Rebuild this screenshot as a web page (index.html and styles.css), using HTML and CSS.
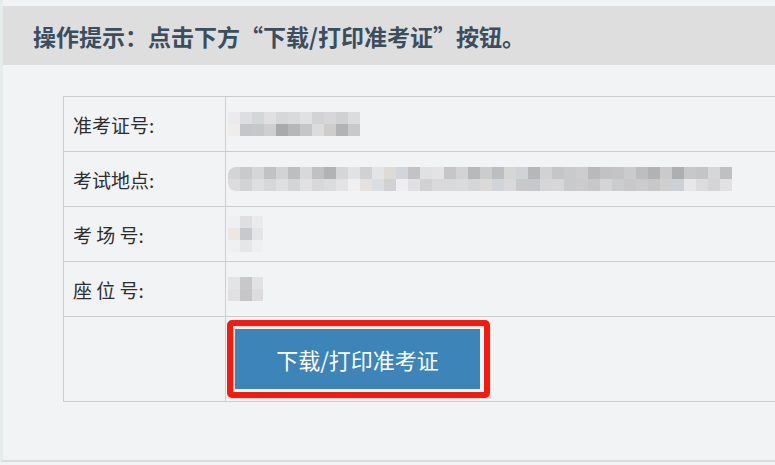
FILE: index.html
```html
<!DOCTYPE html>
<html lang="zh-CN">
<head>
    <meta charset="UTF-8">
    <meta name="viewport" content="width=device-width, initial-scale=1.0">
    <title>准考证打印</title>
    <link rel="stylesheet" href="styles.css">
</head>
<body>
    <div id="page">
        <!-- 操作提示 -->
        <div class="tip-bar">操作提示：点击下方“下载/打印准考证”按钮。</div>

        <!-- 考生信息 -->
        <div class="info-wrap">
            <table class="info-table">
                <tr>
                    <td class="label">准考证号:</td>
                    <td class="value"><div class="mosaic mosaic-no"></div></td>
                </tr>
                <tr>
                    <td class="label">考试地点:</td>
                    <td class="value"><div class="mosaic mosaic-place"></div></td>
                </tr>
                <tr>
                    <td class="label">考 场 号:</td>
                    <td class="value"><div class="mosaic mosaic-room"></div></td>
                </tr>
                <tr>
                    <td class="label">座 位 号:</td>
                    <td class="value"><div class="mosaic mosaic-seat"></div></td>
                </tr>
                <tr class="btn-row">
                    <td class="label"></td>
                    <td class="value">
                        <div class="btn-mark">
                            <a class="btn-print" href="#">下载/打印准考证</a>
                        </div>
                    </td>
                </tr>
            </table>
        </div>
    </div>
</body>
</html>
```

FILE: styles.css
```css
/* ページ全体 */
html, body {
    margin: 0;
    padding: 0;
    overflow: hidden;
}
body {
    background-color: #f2f3f5;
    font-family: "Microsoft YaHei", "Noto Sans CJK SC", sans-serif;
    color: #333;
}
#page {
    height: 462px;
    border-left: 3px solid #e6ebeb;
    border-bottom: 2px solid #dcdcdc;
    box-sizing: border-box;
    padding-top: 6px;
}
/* 操作提示バー */
.tip-bar {
    height: 59px;
    line-height: 61px;
    padding-left: 30px;
    background-color: #dedede;
    color: #3a4e5e;
    font-size: 23px;
    font-weight: bold;
    white-space: nowrap;
}
/* 情報テーブル（右端は画面外まで続く） */
.info-wrap {
    padding: 31px 0 0 60px;
    overflow: hidden;
}
.info-table {
    width: 820px;
    border-collapse: collapse;
}
.info-table td {
    height: 54px;
    border: 1px solid #cdcdcd;
    padding: 0;
    vertical-align: middle;
}
.info-table .label {
    width: 152px;
    padding-left: 9px;
    font-size: 19px;
    color: #2e2e2e;
    white-space: pre;
}
.info-table .value {
    padding-left: 2px;
}
.btn-row td {
    height: 84px;
}
/* モザイク（ぼかし部分） */
.mosaic {
    height: 24px;
    background-repeat: no-repeat;
    background-size: 100% 12px;
    background-position: 0 0, 0 12px;
}
.mosaic-no {
    width: 132px;
    background-image:
        linear-gradient(90deg, #ebebed 0 12px, #dddee0 12px 24px, #d5d6d8 24px 36px, #e0e0e2 36px 48px, #d6d7d9 48px 60px, #d9dadc 60px 72px, #e0e1e3 72px 84px, #d2d3d5 84px 96px, #d7d7d9 96px 108px, #d0d1d3 108px 120px, #dcdcde 120px 132px),
        linear-gradient(90deg, #efedec 0 12px, #c5c6c9 12px 24px, #c6c7c9 24px 36px, #cfcfcf 36px 48px, #a9aaac 48px 60px, #b6b7b9 60px 72px, #c5c6c8 72px 84px, #dcdcde 84px 96px, #cecdcb 96px 108px, #b2b3b5 108px 120px, #c8c9cb 120px 132px);
}
.mosaic-place {
    width: 504px;
    border-radius: 8px 0 0 8px;
    background-image:
        linear-gradient(90deg, #d4d4d6 0 12px, #c9cacc 12px 24px, #d6d6d8 24px 36px, #c1c2c4 36px 48px, #d2d3d5 48px 60px, #bdbec0 60px 72px, #d9d9db 72px 84px, #c0c1c3 84px 96px, #b3b3b5 96px 108px, #d5d6d8 108px 120px, #e2e2e4 120px 132px, #d0d1d3 132px 144px, #e4e4e6 144px 156px, #dedad8 156px 168px, #d2d6da 168px 180px, #c3c3c5 180px 192px, #e0e1e3 192px 204px, #e3e3e5 204px 216px, #c6c6c8 216px 228px, #d3d3d5 228px 240px, #b8b9bb 240px 252px, #cbccce 252px 264px, #bdbec0 264px 276px, #d6d6d4 276px 288px, #d0d3d6 288px 300px, #b6b7b9 300px 312px, #d1d2d4 312px 324px, #c5c6c8 324px 336px, #cacaca 336px 348px, #cdcdcf 348px 360px, #b9b9bb 360px 372px, #c2c2c4 372px 384px, #c4c4c6 384px 396px, #cbcbcb 396px 408px, #bdbec0 408px 420px, #b2b2b4 420px 432px, #c9cac9 432px 444px, #aeafb1 444px 456px, #c7c8ca 456px 468px, #c4c5c7 468px 480px, #d7d7d7 480px 492px, #c0c0c0 492px 504px),
        linear-gradient(90deg, #dcdcde 0 12px, #d3d3d5 12px 24px, #dddedf 24px 36px, #d6d7d9 36px 48px, #dfdfe1 48px 60px, #d4d5d7 60px 72px, #e1e1e3 72px 84px, #d8d8da 84px 96px, #dbdcde 96px 108px, #e3e3e5 108px 120px, #f0f0f2 120px 132px, #e4e1de 132px 144px, #dadde2 144px 156px, #d1d1d3 156px 168px, #eeeef0 168px 180px, #e0e0e2 180px 192px, #d1d1d3 192px 204px, #d9d9db 204px 216px, #d9d9db 216px 228px, #dadbdd 228px 240px, #d5d6d8 240px 252px, #dbdad8 252px 264px, #d1d4d8 264px 276px, #d9d9db 276px 288px, #c9c9cb 288px 300px, #c7c8cb 300px 312px, #d6d6d8 312px 324px, #d7d7d7 324px 336px, #c9cacc 336px 348px, #cbcbcb 348px 360px, #c7c7c9 360px 372px, #d5d5d7 372px 384px, #cbccce 384px 396px, #c8c8ca 396px 408px, #cbcbcb 408px 420px, #c7c7c9 420px 432px, #cfcfcf 432px 444px, #cdd0d6 444px 456px, #e7e7e9 456px 468px, #dcdcde 468px 480px, #d5d5d7 480px 492px, #e1e1e3 492px 504px);
}
.mosaic-room {
    width: 35px;
    height: 36px;
    background-size: 100% 12px;
    background-position: 0 0, 0 12px, 0 24px;
    background-image:
        linear-gradient(90deg, #eff0f2 0 12px, #dfdfe1 12px 24px, #ebebed 24px 35px),
        linear-gradient(90deg, #ede6e1 0 12px, #c8c9cc 12px 24px, #e4e5e7 24px 35px),
        linear-gradient(90deg, #f0f0f2 0 12px, #e6e6e8 12px 24px, #eeeff1 24px 35px);
}
.mosaic-seat {
    width: 35px;
    background-image:
        linear-gradient(90deg, #e4e4e6 0 12px, #c8c8ca 12px 24px, #e2e2e4 24px 35px),
        linear-gradient(90deg, #e0e0e2 0 12px, #c6c6c8 12px 24px, #dcdcde 24px 35px);
}
/* ダウンロードボタン（赤枠で強調） */
.btn-mark {
    display: inline-flex;
    margin-left: -1px;
    padding: 3px 4px 3px 2px;
    border: 6px solid #ff180a;
    border-radius: 5px;
}
.btn-print {
    display: flex;
    align-items: center;
    justify-content: center;
    width: 245px;
    height: 60px;
    background-color: #3d85b8;
    color: #fff;
    font-size: 22px;
    text-decoration: none;
}
```
